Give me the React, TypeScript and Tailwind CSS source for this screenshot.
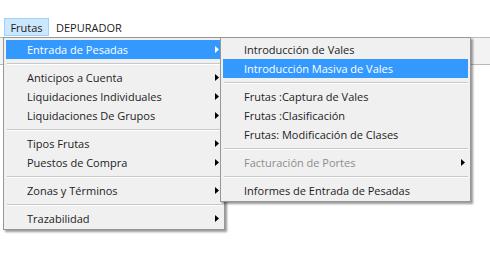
import type { ReactNode } from 'react'

type Entry =
  | { kind: 'item'; label: string; sub?: boolean; active?: boolean; disabled?: boolean }
  | { kind: 'sep' }

const mainMenu: Entry[] = [
  { kind: 'item', label: 'Entrada de Pesadas', sub: true, active: true },
  { kind: 'sep' },
  { kind: 'item', label: 'Anticipos a Cuenta', sub: true },
  { kind: 'item', label: 'Liquidaciones Individuales', sub: true },
  { kind: 'item', label: 'Liquidaciones De Grupos', sub: true },
  { kind: 'sep' },
  { kind: 'item', label: 'Tipos Frutas', sub: true },
  { kind: 'item', label: 'Puestos de Compra', sub: true },
  { kind: 'sep' },
  { kind: 'item', label: 'Zonas y Términos', sub: true },
  { kind: 'sep' },
  { kind: 'item', label: 'Trazabilidad', sub: true },
]

const subMenu: Entry[] = [
  { kind: 'item', label: 'Introducción de Vales' },
  { kind: 'item', label: 'Introducción Masiva de Vales', active: true },
  { kind: 'sep' },
  { kind: 'item', label: 'Frutas :Captura de Vales' },
  { kind: 'item', label: 'Frutas :Clasificación' },
  { kind: 'item', label: 'Frutas: Modificación de Clases' },
  { kind: 'sep' },
  { kind: 'item', label: 'Facturación de Portes', sub: true, disabled: true },
  { kind: 'sep' },
  { kind: 'item', label: 'Informes de Entrada de Pesadas' },
]

const Arrow = ({ light }: { light?: boolean }) => (
  <svg width="4" height="7" viewBox="0 0 4 7" className="shrink-0">
    <path d="M0 0 L4 3.5 L0 7 Z" fill={light ? '#ffffff' : '#000000'} />
  </svg>
)

function MenuList({ entries }: { entries: Entry[] }): ReactNode {
  return entries.map((e, i) =>
    e.kind === 'sep' ? (
      <div key={i} className="h-[9px] flex items-center pl-[1px]">
        <div className="w-full h-[2px] border-t border-[#c8c8c8] border-b border-b-white" />
      </div>
    ) : (
      <div
        key={i}
        className={`h-[19px] flex items-center justify-between pl-[21px] pr-[3px] ${
          e.active ? 'bg-[#3399ff] text-white' : e.disabled ? 'text-[#8d8d8d]' : 'text-[#1c1c24]'
        }`}
      >
        <span className="whitespace-nowrap">{e.label}</span>
        {e.sub && <Arrow light={e.active} />}
      </div>
    ),
  )
}

export default function App() {
  return (
    <div
      className="relative w-[490px] h-[279px] bg-white overflow-hidden text-[11px] leading-none"
      style={{ fontFamily: '"Open Sans", "Noto Sans", sans-serif' }}
    >
      <div className="flex items-center h-[37px] pt-[18px] pl-[4px] pb-[1px]">
        <div className="h-[18px] w-[45px] flex items-center justify-center border border-[#99d1ff] bg-[#cce8ff] text-[#1c1c24]">
          Frutas
        </div>
        <div className="ml-[7px] text-[#1c1c24]">DEPURADOR</div>
      </div>
      <div className="h-[28px] bg-[#f3f3f3] border-y border-[#b9b9b9]" />

      <div className="absolute left-[3px] top-[37px] w-[222px] bg-[#f0f0f0] border border-[#979797] p-[2px] pb-[1px] shadow-[2px_2px_2px_rgba(0,0,0,0.4)]">
        <MenuList entries={mainMenu} />
      </div>

      <div className="absolute left-[220px] top-[37px] w-[251px] z-10 bg-[#f0f0f0] border border-[#979797] p-[2px] pb-[1px] shadow-[2px_2px_2px_rgba(0,0,0,0.4)]">
        <MenuList entries={subMenu} />
      </div>
    </div>
  )
}
